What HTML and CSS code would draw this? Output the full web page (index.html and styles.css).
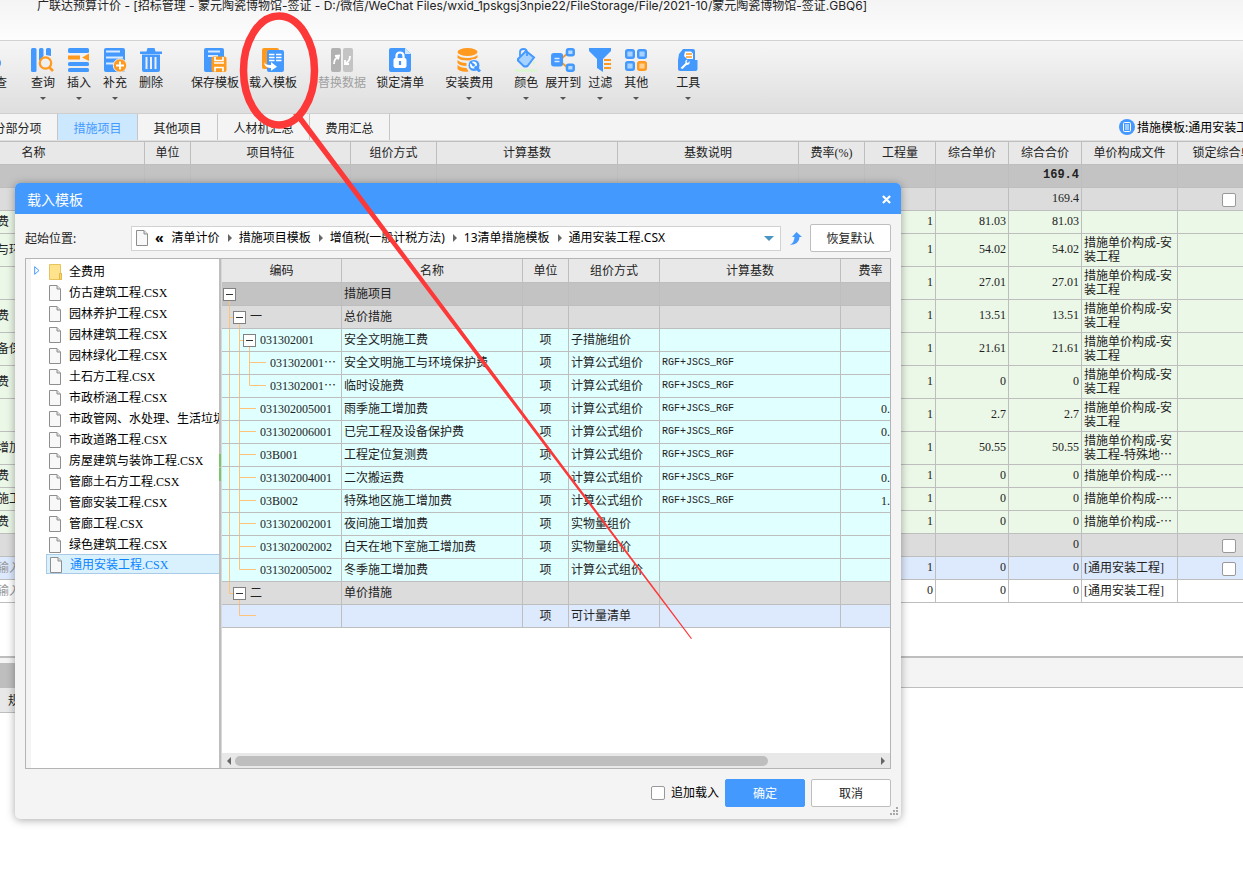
FILE: index.html
```html
<!DOCTYPE html>
<html lang="zh-CN">
<head>
<meta charset="utf-8">
<title>广联达预算计价</title>
<link rel="stylesheet" href="styles.css">
</head>
<body>
<svg class="defs" aria-hidden="true">
  <symbol id="file" viewBox="0 0 12 16"><path d="M.5.5h7.5l3.500 3.500v11.500H.5z" fill="#f8f8f8" stroke="#8e8e8e"/><path d="M8 .5v3.500h3.500" fill="#ddd" stroke="#8e8e8e"/></symbol>
  <symbol id="folder" viewBox="0 0 13 16"><path d="M.5.5h11v9h1v6H.5z" fill="#ffe38c" stroke="#e9c45c"/><path d="M10.500 9.500h2v6h-2z" fill="#fbd467" stroke="#e3b84a"/></symbol>
  <symbol id="g0" viewBox="0 0 48 22"><path d="M7.500 11v11"/></symbol>
  <symbol id="g1" viewBox="0 0 48 22"><path d="M7.500 0v22M7.500 11.500h10v10.500"/></symbol>
  <symbol id="g1e" viewBox="0 0 48 22"><path d="M7.500 0v11.500h10v10.500"/></symbol>
  <symbol id="g2" viewBox="0 0 48 22"><path d="M7.500 0v22M17.500 0v22M17.500 11.500h10v10.500"/></symbol>
  <symbol id="leaf2" viewBox="0 0 48 22"><path d="M7.500 0v22M17.500 0v22M17.500 10.500h16.500"/></symbol>
  <symbol id="leaf2e" viewBox="0 0 48 22"><path d="M7.500 0v22M17.500 0v10.500h16.500"/></symbol>
  <symbol id="leaf3" viewBox="0 0 48 22"><path d="M7.500 0v22M17.500 0v22M27.500 0v22M27.500 10.500h16.500"/></symbol>
  <symbol id="leaf3e" viewBox="0 0 48 22"><path d="M7.500 0v22M17.500 0v22M27.500 0v10.500h16.500"/></symbol>
  <symbol id="tail" viewBox="0 0 48 22"><path d="M17.500 0v10.500h16.500"/></symbol>
</svg>

<div class="app">
  <header class="titlebar">广联达预算计价 - [招标管理 - 蒙元陶瓷博物馆-签证 - D:/微信/WeChat Files/wxid_1pskgsj3npie22/FileStorage/File/2021-10/蒙元陶瓷博物馆-签证.GBQ6]</header>

  <nav class="toolbar" aria-label="工具栏">
    <button class="tool first"><svg class="icon" viewBox="0 0 24 24"><circle cx="12" cy="15" r="6" fill="#4499ff"/></svg><span>检查</span></button>
    <button class="tool gap-xl"><svg class="icon" viewBox="0 0 24 24"><g fill="#4499ff"><rect x="0" y="0" width="5.500" height="24" rx="1.500"/><path d="M8 1.500Q8 0 9.500 0h1.500q1.500 0 1.500 1.500V8l-4.500 5zM15 1.500Q15 0 16.500 0h2q1.500 0 1.500 1.500V8l-5-1z"/></g><circle cx="14.500" cy="15" r="5.700" fill="none" stroke="#ff9a1f" stroke-width="2.200"/><path d="M18.500 19.500l3.500 3.500" stroke="#ff9a1f" stroke-width="2.600"/></svg><span>查询</span><i class="caret"></i></button>
    <button class="tool gap-m"><svg class="icon" viewBox="0 0 24 24"><g fill="#4499ff"><rect x="1" y="0" width="21" height="5" rx="1.500"/><rect x="1" y="14" width="21" height="4" rx="1.500"/><rect x="1" y="20" width="21" height="4" rx="1.500"/></g><path d="M1 7.500h12v4H1zM15 9.500l7-4v7.500z" fill="#ff9a1f"/></svg><span>插入</span><i class="caret"></i></button>
    <button class="tool gap-m"><svg class="icon" viewBox="0 0 24 24"><rect x="1" y="0" width="21" height="24" rx="2" fill="#4499ff"/><path d="M3 3.500h14M3 9.500h17M3 15.500h8" stroke="#d8eaff" stroke-width="1.800"/><circle cx="17" cy="17.500" r="6.700" fill="#ff9a1f" stroke="#eee"/><path d="M13 17.500h8M17 13.500v8" stroke="#fff" stroke-width="2"/></svg><span>补充</span><i class="caret"></i></button>
    <button class="tool gap-m"><svg class="icon" viewBox="0 0 24 24"><path d="M1 3.500h6.500L8.500 0h7l1 3.500H23V6H1zM3 6.500h18V22q0 2-2 2H5q-2 0-2-2z" fill="#4499ff"/><path d="M7.500 9v12M12 9v12M16.500 9v12" stroke="#eee" stroke-width="2"/></svg><span>删除</span></button>
    <button class="tool gap-xxl"><svg class="icon" viewBox="0 0 24 24"><rect x="1" y="0" width="20" height="24" rx="2" fill="#4499ff"/><path d="M5 3.500h12M5 8h10" stroke="#d8eaff" stroke-width="1.800"/><rect x="8.500" y="8.500" width="15" height="15.500" rx="2" fill="#ff9a1f"/><path d="M12 9v3.500h8V9M11 15h10M12 23.500v-4h8v4" fill="none" stroke="#fff" stroke-width="1.700"/></svg><span>保存模板</span></button>
    <button class="tool gap-s"><svg class="icon" viewBox="0 0 24 24"><rect x="1" y="0" width="17" height="21" rx="2" fill="#ff9a1f"/><rect x="6" y="2" width="17" height="22" rx="2" fill="#4499ff"/><path d="M8 6.500h5.500M15 6.500h5.500M8 9.500h5.500M15 9.500h5.500M8 12.500h5.500M15 12.500h5.500" stroke="#fff" stroke-width="1.500"/><path d="M3 14q1.500 3.500 7 3v-3l6 4.800-6 4V20Q3.500 20 3 14z" fill="#fff"/></svg><span>载入模板</span></button>
    <button class="tool gap-l off" disabled><svg class="icon" viewBox="0 0 24 24"><rect x="1" y="0" width="10" height="24" rx="2" fill="#b2b2b2"/><rect x="13" y="0" width="10" height="24" rx="2" fill="#c4c4c4"/><path d="M4 16q0-5 4-7M5 8l4-.5-1 4M20 8q0 5-4 7M15 12v4h4" stroke="#fff" stroke-width="1.800" fill="none"/></svg><span>替换数据</span></button>
    <button class="tool gap-s"><svg class="icon" viewBox="0 0 24 24"><path d="M3 0h14l6 6v16q0 2-2 2H3q-2 0-2-2V2q0-2 2-2z" fill="#4499ff"/><path d="M17 0v6h6z" fill="#d3e8ff"/><rect x="5.500" y="10" width="13" height="10" rx="2" fill="#fff"/><path d="M8.500 10V8q0-3.500 3.500-3.500T15.500 8v2" fill="none" stroke="#fff" stroke-width="2.200"/><path d="M12 13v4" stroke="#4499ff" stroke-width="2.200"/></svg><span>锁定清单</span></button>
    <button class="tool gap-l"><svg class="icon" viewBox="0 0 24 24"><g fill="#ff9a1f"><ellipse cx="10.500" cy="4" rx="10" ry="4"/><path d="M.5 7q3 3 10 3t10-3v2.500q-3 3-10 3T.5 10zM.5 12q3 3 9 3v3q-7 0-9-3zM.5 17q3 3 9 3l2 3.500Q4 24.500.5 21z"/></g><circle cx="17" cy="17.500" r="6" fill="#4499ff" stroke="#eee"/><circle cx="16.500" cy="17" r="2.500" fill="none" stroke="#fff" stroke-width="2"/><path d="M18 18.500l5 5" stroke="#4499ff" stroke-width="3"/><path d="M13 13.500l3.500 3.500" stroke="#4499ff" stroke-width="2"/></svg><span>安装费用</span><i class="caret"></i></button>
    <button class="tool gap-l"><svg class="icon" viewBox="0 0 24 24"><path d="M4 11l8-8 8 6.500-6.500 8.500q-2 1-4 0L4 12.500z" fill="#a8d2ff" stroke="#4499ff" stroke-width="2"/><path d="M6 8V4q0-3 3.500-3T13 5v3" fill="none" stroke="#4499ff" stroke-width="1.800"/><path d="M19 12q3 3 1 5-2-1-1-5z" fill="#d9f6cf"/><path d="M1 22.500h22" stroke="#d9f6cf" stroke-width="2.500"/></svg><span>颜色</span><i class="caret"></i></button>
    <button class="tool gap-xs"><svg class="icon" viewBox="0 0 24 24"><path d="M10 11l7-6M10 14l7 6" stroke="#ff9a1f" stroke-width="2"/><g fill="#b5d9ff" stroke="#4499ff" stroke-width="2.500"><rect x="1.300" y="6.300" width="9.500" height="11" rx="1.500" fill="#4499ff"/><rect x="16" y="1.300" width="6.700" height="6" rx="1.500"/><rect x="16" y="16.700" width="6.700" height="6" rx="1.500"/></g><path d="M3.500 10.500h5M3.500 13.500h5" stroke="#d8eaff" stroke-width="1.500"/></svg><span>展开到</span><i class="caret"></i></button>
    <button class="tool gap-xs"><svg class="icon" viewBox="0 0 24 24"><path d="M1 0h22v3l-8 8v13l-6-4v-9L1 3z" fill="#4499ff"/><path d="M16 12h7M16 16h7M16 20h7" stroke="#ff9a1f" stroke-width="2"/></svg><span>过滤</span><i class="caret"></i></button>
    <button class="tool gap-m"><svg class="icon" viewBox="0 0 24 24"><g fill="#a8d2ff" stroke="#4499ff" stroke-width="2.400"><rect x="2.200" y="2.200" width="7.600" height="7.600" rx="1.500"/><rect x="14.200" y="2.200" width="7.600" height="7.600" rx="1.500"/><rect x="2.200" y="14.200" width="7.600" height="7.600" rx="1.500"/><rect x="14.200" y="14.200" width="7.600" height="7.600" rx="1.500" fill="#ffd091" stroke="#ff9a1f"/></g></svg><span>其他</span><i class="caret"></i></button>
    <button class="tool gap-xxl"><svg class="icon" viewBox="0 0 24 24"><path d="M3 6l4-5h10q2 0 2 2v9h2.500v9q0 2-2 2H4q-2 0-2-2V12z" fill="#4499ff"/><path d="M9 3.500h6l2 2V11h-6L8 8z" fill="#fff"/><path d="M10 6h6M10 9h6" stroke="#ff9a1f" stroke-width="1.500"/><path d="M4.500 20l5-5q-1-3 2-3.500l-1 2.500 1.500 1 1.500-2q1 4-3 4l-4 4z" fill="#fff"/></svg><span>工具</span><i class="caret"></i></button>
  </nav>

  <div class="tabs">
    <button class="tab">分部分项</button>
    <button class="tab active">措施项目</button>
    <button class="tab">其他项目</button>
    <button class="tab wide">人材机汇总</button>
    <button class="tab">费用汇总</button>
    <div class="template"><svg class="badge" viewBox="0 0 16 16"><circle cx="8" cy="8" r="8" fill="#4499ff"/><rect x="4.500" y="3.500" width="7" height="9" rx="1" fill="none" stroke="#fff"/><path d="M6 6h4M6 8h4M6 10h4" stroke="#fff"/></svg><span>措施模板:通用安装工程</span></div>
  </div>

  <main class="sheet">
    <table class="grid main-grid">
      <colgroup><col class="w-name"><col class="w-46"><col class="w-160"><col class="w-86"><col class="w-181"><col class="w-181"><col class="w-66"><col class="w-71"><col class="w-73"><col class="w-73"><col class="w-96"><col class="w-102"></colgroup>
      <thead><tr><th>名称</th><th>单位</th><th>项目特征</th><th>组价方式</th><th>计算基数</th><th>基数说明</th><th>费率(%)</th><th>工程量</th><th>综合单价</th><th>综合合价</th><th>单价构成文件</th><th>锁定综合单价</th></tr></thead>
      <tbody>
        <tr class="dark"><td></td><td></td><td></td><td></td><td></td><td></td><td></td><td></td><td></td><td class="num strong">169.4</td><td></td><td></td></tr>
        <tr class="gray"><td></td><td></td><td></td><td></td><td></td><td></td><td></td><td></td><td></td><td class="num">169.4</td><td></td><td class="center"><input type="checkbox" class="check" aria-label="锁定综合单价"></td></tr>
        <tr class="green"><td>安全文明施工费</td><td></td><td></td><td></td><td></td><td></td><td></td><td class="num">1</td><td class="num">81.03</td><td class="num">81.03</td><td></td><td></td></tr>
        <tr class="green tall"><td>安全文明施工与环境保护费</td><td></td><td></td><td></td><td></td><td></td><td></td><td class="num">1</td><td class="num">54.02</td><td class="num">54.02</td><td class="wrap">措施单价构成-安装工程</td><td></td></tr>
        <tr class="green tall"><td>临时设施费</td><td></td><td></td><td></td><td></td><td></td><td></td><td class="num">1</td><td class="num">27.01</td><td class="num">27.01</td><td class="wrap">措施单价构成-安装工程</td><td></td></tr>
        <tr class="green tall"><td>雨季施工增加费</td><td></td><td></td><td></td><td></td><td></td><td></td><td class="num">1</td><td class="num">13.51</td><td class="num">13.51</td><td class="wrap">措施单价构成-安装工程</td><td></td></tr>
        <tr class="green tall"><td>已完工程及设备保护费</td><td></td><td></td><td></td><td></td><td></td><td></td><td class="num">1</td><td class="num">21.61</td><td class="num">21.61</td><td class="wrap">措施单价构成-安装工程</td><td></td></tr>
        <tr class="green tall"><td>工程定位复测费</td><td></td><td></td><td></td><td></td><td></td><td></td><td class="num">1</td><td class="num">0</td><td class="num">0</td><td class="wrap">措施单价构成-安装工程</td><td></td></tr>
        <tr class="green tall"><td>二次搬运费</td><td></td><td></td><td></td><td></td><td></td><td></td><td class="num">1</td><td class="num">2.7</td><td class="num">2.7</td><td class="wrap">措施单价构成-安装工程</td><td></td></tr>
        <tr class="green tall"><td>特殊地区施工增加费</td><td></td><td></td><td></td><td></td><td></td><td></td><td class="num">1</td><td class="num">50.55</td><td class="num">50.55</td><td class="wrap">措施单价构成-安装工程-特殊地⋯</td><td></td></tr>
        <tr class="green"><td>夜间施工增加费</td><td></td><td></td><td></td><td></td><td></td><td></td><td class="num">1</td><td class="num">0</td><td class="num">0</td><td>措施单价构成-⋯</td><td></td></tr>
        <tr class="green"><td>白天在地下室施工增加费</td><td></td><td></td><td></td><td></td><td></td><td></td><td class="num">1</td><td class="num">0</td><td class="num">0</td><td>措施单价构成-⋯</td><td></td></tr>
        <tr class="green"><td>冬季施工增加费</td><td></td><td></td><td></td><td></td><td></td><td></td><td class="num">1</td><td class="num">0</td><td class="num">0</td><td>措施单价构成-⋯</td><td></td></tr>
        <tr class="gray"><td></td><td></td><td></td><td></td><td></td><td></td><td></td><td></td><td></td><td class="num">0</td><td></td><td class="center"><input type="checkbox" class="check" aria-label="锁定综合单价"></td></tr>
        <tr class="blue"><td class="hint">自动提示：请输入清单简称</td><td></td><td></td><td></td><td></td><td></td><td></td><td class="num">1</td><td class="num">0</td><td class="num">0</td><td>[通用安装工程]</td><td class="center"><input type="checkbox" class="check" aria-label="锁定综合单价"></td></tr>
        <tr class="white"><td class="hint">自动提示：请输入清单简称</td><td></td><td></td><td></td><td></td><td></td><td></td><td class="num">0</td><td class="num">0</td><td class="num">0</td><td>[通用安装工程]</td><td></td></tr>
      </tbody>
    </table>
  </main>

  <section class="lower">
    <div class="lower-tabs"><span class="lower-tab"></span></div>
    <div class="lower-head">规格</div>
  </section>

  <section class="dialog" role="dialog" aria-labelledby="dlg-title">
    <div class="dialog-title"><span id="dlg-title">载入模板</span><button class="close" aria-label="关闭"><svg viewBox="0 0 10 10"><path d="M1 1l8 8M9 1l-8 8" stroke="#fff" stroke-width="2.400"/></svg></button></div>
    <div class="dialog-body">
      <div class="location">
        <span class="location-label">起始位置:</span>
        <div class="path">
          <svg class="file"><use href="#file"/></svg>
          <span class="back">«</span>
          <span>清单计价</span><i class="sep"></i><span>措施项目模板</span><i class="sep"></i><span>增值税(一般计税方法)</span><i class="sep"></i><span>13清单措施模板</span><i class="sep"></i><span>通用安装工程.CSX</span>
          <button class="drop" aria-label="展开路径"></button>
        </div>
        <button class="up" aria-label="上一级"><svg viewBox="0 0 12 13"><path d="M6.500 0L12 5H9.500q0 7-9.500 8 4.500-3 4.500-8H2z" fill="#4499ff"/></svg></button>
        <button class="btn">恢复默认</button>
      </div>

      <div class="panes">
        <ul class="tree">
          <li><svg class="expander" viewBox="0 0 6 9"><path d="M.7.7v7.600L5 4.500z" fill="#fff" stroke="#4499ff"/></svg><svg class="file folder"><use href="#folder"/></svg>全费用</li>
          <li><svg class="file"><use href="#file"/></svg>仿古建筑工程.CSX</li>
          <li><svg class="file"><use href="#file"/></svg>园林养护工程.CSX</li>
          <li><svg class="file"><use href="#file"/></svg>园林建筑工程.CSX</li>
          <li><svg class="file"><use href="#file"/></svg>园林绿化工程.CSX</li>
          <li><svg class="file"><use href="#file"/></svg>土石方工程.CSX</li>
          <li><svg class="file"><use href="#file"/></svg>市政桥涵工程.CSX</li>
          <li><svg class="file"><use href="#file"/></svg>市政管网、水处理、生活垃圾处理工程.CSX</li>
          <li><svg class="file"><use href="#file"/></svg>市政道路工程.CSX</li>
          <li><svg class="file"><use href="#file"/></svg>房屋建筑与装饰工程.CSX</li>
          <li><svg class="file"><use href="#file"/></svg>管廊土石方工程.CSX</li>
          <li><svg class="file"><use href="#file"/></svg>管廊安装工程.CSX</li>
          <li><svg class="file"><use href="#file"/></svg>管廊工程.CSX</li>
          <li><svg class="file"><use href="#file"/></svg>绿色建筑工程.CSX</li>
          <li class="selected"><svg class="file"><use href="#file"/></svg>通用安装工程.CSX</li>
        </ul>
        <div class="splitter"><i></i><i></i></div>
        <div class="preview">
          <div class="preview-scroll">
            <table class="grid">
              <colgroup><col class="w-120"><col class="w-181"><col class="w-46"><col class="w-91"><col class="w-181"><col class="w-60"></colgroup>
              <thead><tr><th>编码</th><th>名称</th><th>单位</th><th>组价方式</th><th>计算基数</th><th>费率</th></tr></thead>
              <tbody>
                <tr class="dark"><td class="code l0"><svg class="guide"><use href="#g0"/></svg><button class="toggle" aria-label="折叠"></button></td><td>措施项目</td><td></td><td></td><td></td><td></td></tr>
                <tr class="gray"><td class="code l1"><svg class="guide"><use href="#g1"/></svg><button class="toggle" aria-label="折叠"></button>一</td><td>总价措施</td><td></td><td></td><td></td><td></td></tr>
                <tr class="cyan"><td class="code l2"><svg class="guide"><use href="#g2"/></svg><button class="toggle" aria-label="折叠"></button>031302001</td><td>安全文明施工费</td><td class="center">项</td><td>子措施组价</td><td></td><td></td></tr>
                <tr class="cyan"><td class="code t3"><svg class="guide"><use href="#leaf3"/></svg>031302001⋯</td><td>安全文明施工与环境保护费</td><td class="center">项</td><td>计算公式组价</td><td class="formula">RGF+JSCS_RGF</td><td></td></tr>
                <tr class="cyan"><td class="code t3"><svg class="guide"><use href="#leaf3e"/></svg>031302001⋯</td><td>临时设施费</td><td class="center">项</td><td>计算公式组价</td><td class="formula">RGF+JSCS_RGF</td><td></td></tr>
                <tr class="cyan"><td class="code t2"><svg class="guide"><use href="#leaf2"/></svg>031302005001</td><td>雨季施工增加费</td><td class="center">项</td><td>计算公式组价</td><td class="formula">RGF+JSCS_RGF</td><td class="rate">0.</td></tr>
                <tr class="cyan"><td class="code t2"><svg class="guide"><use href="#leaf2"/></svg>031302006001</td><td>已完工程及设备保护费</td><td class="center">项</td><td>计算公式组价</td><td class="formula">RGF+JSCS_RGF</td><td class="rate">0.</td></tr>
                <tr class="cyan"><td class="code t2"><svg class="guide"><use href="#leaf2"/></svg>03B001</td><td>工程定位复测费</td><td class="center">项</td><td>计算公式组价</td><td class="formula">RGF+JSCS_RGF</td><td></td></tr>
                <tr class="cyan"><td class="code t2"><svg class="guide"><use href="#leaf2"/></svg>031302004001</td><td>二次搬运费</td><td class="center">项</td><td>计算公式组价</td><td class="formula">RGF+JSCS_RGF</td><td class="rate">0.</td></tr>
                <tr class="cyan"><td class="code t2"><svg class="guide"><use href="#leaf2"/></svg>03B002</td><td>特殊地区施工增加费</td><td class="center">项</td><td>计算公式组价</td><td class="formula">RGF+JSCS_RGF</td><td class="rate">1.</td></tr>
                <tr class="cyan"><td class="code t2"><svg class="guide"><use href="#leaf2"/></svg>031302002001</td><td>夜间施工增加费</td><td class="center">项</td><td>实物量组价</td><td></td><td></td></tr>
                <tr class="cyan"><td class="code t2"><svg class="guide"><use href="#leaf2"/></svg>031302002002</td><td>白天在地下室施工增加费</td><td class="center">项</td><td>实物量组价</td><td></td><td></td></tr>
                <tr class="cyan"><td class="code t2"><svg class="guide"><use href="#leaf2e"/></svg>031302005002</td><td>冬季施工增加费</td><td class="center">项</td><td>计算公式组价</td><td></td><td></td></tr>
                <tr class="gray"><td class="code l1"><svg class="guide"><use href="#g1e"/></svg><button class="toggle" aria-label="折叠"></button>二</td><td>单价措施</td><td></td><td></td><td></td><td></td></tr>
                <tr class="blue"><td class="code t2"><svg class="guide"><use href="#tail"/></svg></td><td></td><td class="center">项</td><td>可计量清单</td><td></td><td></td></tr>
              </tbody>
            </table>
          </div>
          <div class="hscroll"><i class="arrow-left"></i><div class="track"><div class="thumb"></div></div><i class="arrow-right"></i></div>
        </div>
      </div>

      <div class="actions">
        <label class="append"><input type="checkbox" class="check">追加载入</label>
        <button class="btn primary">确定</button>
        <button class="btn">取消</button>
      </div>
    </div>
    <svg class="grip" viewBox="0 0 8 8"><path d="M6 0h2v2H6zM3 3h2v2H3zM6 3h2v2H6zM0 6h2v2H0zM3 6h2v2H3zM6 6h2v2H6z" fill="#a8a8a8"/></svg>
  </section>

  <svg class="annotation" viewBox="0 0 700 645" aria-hidden="true"><ellipse cx="279" cy="70.500" rx="35.500" ry="54.500" fill="none" stroke="#fd3838" stroke-width="7.500"/><path d="M293 114l8 1L692 638.500l-1 .5L300 123z" fill="#fd3838"/></svg>
</div>
</body>
</html>
```
FILE: styles.css
```css
* { box-sizing: border-box; }

body {
  margin: 0;
  background: #fff;
  color: #222;
  font: 12px/14px "Noto Sans", "Noto Sans CJK SC", sans-serif;
}

button {
  margin: 0;
  padding: 0;
  border: 0;
  background: none;
  color: inherit;
  font: inherit;
}

.defs { display: block; width: 0; height: 0; position: absolute; }

.app {
  position: relative;
  min-height: 100vh;
  overflow: hidden;
}

.titlebar {
  height: 41px;
  padding-left: 37px;
  border-bottom: 1px solid #d2d2d2;
  background: linear-gradient(#f4f4f4, #fdfdfd);
  font-family: Inter, "Noto Sans CJK SC", sans-serif;
  line-height: 12px;
  white-space: nowrap;
  overflow: hidden;
}

/* toolbar */
.toolbar {
  display: flex;
  align-items: flex-start;
  height: 73px;
  padding-top: 7px;
  border-bottom: 1px solid #cfcfcf;
  background: linear-gradient(#f6f6f6, #dedede);
}

.tool {
  display: flex;
  flex: none;
  flex-direction: column;
  align-items: center;
  white-space: nowrap;
}
.tool span { margin-top: 3px; line-height: 16px; }
.tool.first { margin-left: -17px; }
.icon { width: 24px; height: 24px; }
.off { color: #a0a0a0; }
.caret {
  margin-top: 6px;
  border: 3px solid transparent;
  border-top-color: #555;
  border-bottom: 0;
}
.gap-xs { margin-left: 7px; }
.gap-s { margin-left: 10px; }
.gap-m { margin-left: 12px; }
.gap-l { margin-left: 21px; }
.gap-xl { margin-left: 24px; }
.gap-xxl { margin-left: 28px; }

/* tabs */
.tabs {
  display: flex;
  height: 27px;
  margin-left: -22px;
  border-bottom: 1px solid #e0e0e0;
  background: #f4f4f4;
}
.tab {
  flex: none;
  width: 80px;
  padding-top: 4px;
  border-right: 1px solid #c6c6c6;
}
.tab.wide { width: 92px; }
.tab.active { background: #cce8ff; color: #4499ff; }
.template {
  display: flex;
  align-items: center;
  width: 124px;
  margin-left: auto;
  overflow: hidden;
  color: #000;
  white-space: nowrap;
}
.template span { padding-top: 2px; }
.badge { flex: none; width: 16px; height: 16px; margin-right: 2px; }

/* data grids */
.sheet {
  padding-bottom: 53px;
  border-top: 1px solid #bebebe;
  overflow: hidden;
}
.grid {
  border-spacing: 0;
  table-layout: fixed;
  width: 0;
  font-family: "Liberation Serif", "Noto Sans CJK SC", serif;
  white-space: nowrap;
}
.main-grid { margin-left: -77px; }
.grid th {
  height: 23px;
  padding: 0;
  border-right: 1px solid #bebebe;
  border-bottom: 1px solid #bebebe;
  background: #e8e8e8;
  font-weight: normal;
}
.grid td {
  height: 23px;
  padding: 0 2px;
  border-right: 1px solid #bebebe;
  border-bottom: 1px solid #bebebe;
  overflow: hidden;
}
.grid .tall td { height: 33px; }
.grid .num { padding-bottom: 2px; text-align: right; }
.grid .strong { font-family: "Liberation Mono", monospace; font-weight: bold; }
.grid .center { text-align: center; }
.grid .wrap { white-space: normal; }
.grid .hint { color: #999; }
.grid .formula { font-family: "Liberation Mono", monospace; font-size: 10px; }
.grid .rate { padding-right: 10px; text-align: right; }

.dark { background: #c3c3c3; }
.gray { background: #dcdcdc; }
.green { background: #ebf7e7; }
.blue { background: #dde9fd; }
.cyan { background: #e0ffff; }

.w-name { width: 222px; }
.w-46 { width: 46px; }
.w-60 { width: 60px; }
.w-66 { width: 66px; }
.w-71 { width: 71px; }
.w-73 { width: 73px; }
.w-86 { width: 86px; }
.w-91 { width: 91px; }
.w-96 { width: 96px; }
.w-102 { width: 102px; }
.w-120 { width: 120px; }
.w-160 { width: 160px; }
.w-181 { width: 181px; }

.check {
  appearance: none;
  width: 14px;
  height: 14px;
  margin: 0;
  border: 1px solid #999;
  border-radius: 2px;
  background: #fff;
  vertical-align: middle;
}

/* lower panel */
.lower { border-top: 2px solid #bebebe; }
.lower-tabs {
  display: flex;
  align-items: flex-end;
  height: 30px;
  border-bottom: 1px solid #bebebe;
  background: #f4f4f4;
}
.lower-tab { width: 90px; height: 24px; background: #bebebe; }
.lower-head {
  width: 50%;
  padding: 6px 8px 4px;
  border-bottom: 1px solid #bebebe;
  background: #e8e8e8;
}

/* dialog */
.dialog {
  position: absolute;
  top: 183px;
  left: 15px;
  width: calc(100% - 30px);
  max-width: 886px;
  border-radius: 5px;
  background: #f4f4f4;
  box-shadow: 0 1px 8px rgba(0, 0, 0, .35);
}
.dialog-title {
  display: flex;
  align-items: center;
  justify-content: space-between;
  height: 31px;
  padding: 2px 10px 0 12px;
  border-radius: 5px 5px 0 0;
  background: #4499ff;
  color: #fff;
  font-size: 14px;
}
.close { width: 9px; height: 14px; }
.close svg { display: block; width: 9px; height: 9px; }
.dialog-body { padding: 10px 10px 12px; }

.location { display: flex; align-items: center; }
.location-label { flex: none; width: 106px; padding-top: 2px; }
.path {
  display: flex;
  flex: 1;
  align-items: center;
  height: 25px;
  padding: 0 6px 0 4px;
  border: 1px solid #d2d2d2;
  background: #fff;
  color: #000;
  white-space: nowrap;
}
.file { flex: none; width: 12px; height: 16px; }
.back { margin: 0 8px 0 7px; font-size: 14px; font-weight: bold; }
.sep {
  margin: 0 7px 0 8px;
  border: 4px solid transparent;
  border-left-color: #666;
  border-right: 0;
}
.drop {
  margin-left: auto;
  border: 5px solid transparent;
  border-top-color: #4a94c4;
  border-bottom: 0;
}
.up { margin: 0 8px 0 9px; }
.up svg { display: block; width: 12px; height: 13px; }
.btn {
  flex: none;
  width: 81px;
  height: 28px;
  padding-top: 2px;
  border: 1px solid #bebebe;
  border-radius: 2px;
  background: #fff;
}
.btn.primary { border-color: #4499ff; background: #4499ff; color: #fff; }

.panes {
  display: flex;
  height: 511px;
  margin-top: 6px;
  border: 1px solid #b4b4b4;
  background: #fff;
}
.tree {
  flex: none;
  width: 193px;
  margin: 0;
  padding: 2px 0 0 20px;
  border-left: 5px solid #f4f4f4;
  overflow: hidden;
  color: #000;
  font-family: "Liberation Serif", "Noto Sans CJK SC", serif;
  list-style: none;
  white-space: nowrap;
}
.tree li {
  display: flex;
  align-items: center;
  height: 21px;
  margin-left: -5px;
  padding-left: 3px;
}
.tree .file { margin-right: 8px; }
.tree .folder { width: 13px; margin-right: 7px; }
.expander { flex: none; width: 6px; height: 9px; margin: 0 9px 3px -15px; }
.tree .selected {
  height: 20px;
  margin-top: -1px;
  padding-top: 2px;
  border: 1px solid #a9cbe8;
  border-right: 0;
  background: #d9f1fd;
  color: #0a84ff;
}

.splitter {
  display: flex;
  flex: none;
  flex-direction: column;
  justify-content: center;
  gap: 1px;
  width: 3px;
  padding-bottom: 92px;
  border-right: 1px solid #d8d8d8;
  background: #bebebe;
}
.splitter i { height: 13px; background: #7cc46a; }

.preview {
  display: flex;
  flex: 1;
  flex-direction: column;
  min-width: 0;
}
.preview-scroll { flex: 1; min-height: 0; overflow: hidden; }
.preview .grid th { height: 24px; }
.grid .code { position: relative; padding: 0; }
.grid .l0 { padding-left: 1px; }
.grid .l1 { padding-left: 11px; }
.grid .l2 { padding-left: 21px; }
.grid .t2 { padding-left: 38px; }
.grid .t3 { padding-left: 48px; }
/* guides run beneath the toggles of a code cell */
.guide {
  position: absolute;
  top: 0;
  left: 0;
  width: 48px;
  height: 22px;
  fill: none;
  stroke: #ffc27a;
}
.toggle {
  position: relative;
  width: 13px;
  height: 13px;
  margin-right: 4px;
  border: 1px solid #808080;
  background: linear-gradient(#333, #333) center / 7px 1px no-repeat #fff;
  vertical-align: middle;
}

.hscroll {
  display: flex;
  align-items: center;
  gap: 4px;
  height: 15px;
  padding: 0 5px;
  background: #e8e8e8;
}
.track { flex: 1; }
.thumb { width: 83%; height: 10px; border-radius: 5px; background: #bebebe; }
.arrow-left, .arrow-right { border: 4px solid transparent; }
.arrow-left { border-left: 0; border-right-color: #666; }
.arrow-right { border-right: 0; border-left-color: #666; }

.actions {
  display: flex;
  align-items: center;
  justify-content: flex-end;
  gap: 6px;
  margin-top: 10px;
}
.actions .btn { width: 80px; }
.append { display: flex; align-items: center; gap: 6px; color: #000; }
.grip { position: absolute; right: 3px; bottom: 4px; width: 8px; height: 8px; }

.annotation {
  position: absolute;
  top: 0;
  left: 0;
  width: 700px;
  height: 645px;
  pointer-events: none;
}
```
